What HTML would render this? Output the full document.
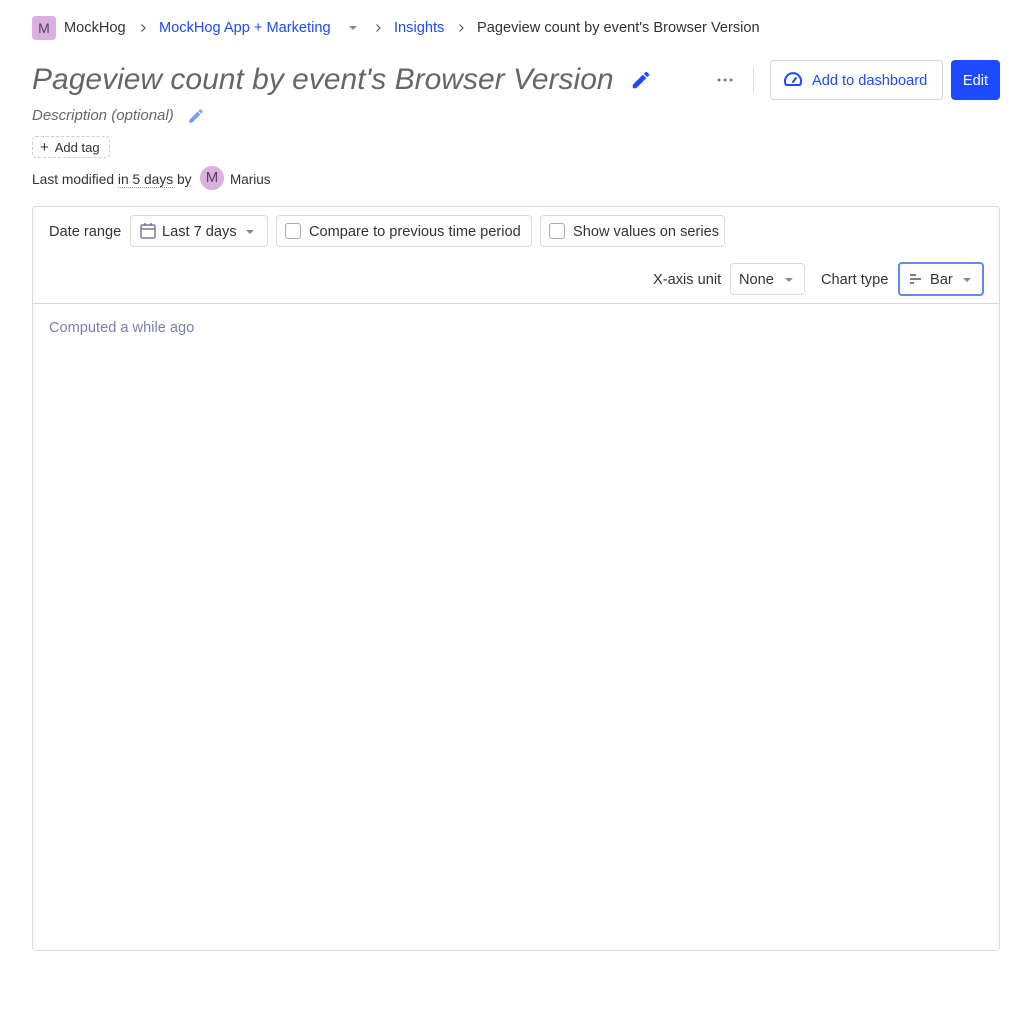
<!DOCTYPE html>
<html><head><meta charset="utf-8"><style>
*{box-sizing:border-box;margin:0;padding:0}
body{width:1032px;height:1031px;background:#fff;font-family:"Liberation Sans",sans-serif;color:#333;position:relative;overflow:hidden}
.a{position:absolute;white-space:nowrap}
.btn{position:absolute;border:1px solid #d9d9d9;border-radius:4px;background:#fff;font-size:14.6px;display:flex;align-items:center;padding-top:2px}
.caret{width:0;height:0;border-left:4px solid transparent;border-right:4px solid transparent;border-top:4px solid #888;display:inline-block}
.cb{width:16px;height:16px;border:1px solid #aaa;border-radius:3px;display:inline-block;margin-right:8px;margin-top:-2px}
.chev{position:absolute;top:22px}
</style></head><body>
<div class="a" style="left:32px;top:16px;width:24px;height:24px;border-radius:4px;background:#dbb0e0;color:#5a3d66;font-size:14px;text-align:center;line-height:24px">M</div>
<div class="a" style="left:64px;top:20px;font-size:14.6px;color:#333">MockHog</div>
<svg class="chev" style="left:139px" width="8" height="12" viewBox="0 0 8 12"><path d="M2.5 2.5l3.5 3.5-3.5 3.5" fill="none" stroke="#555" stroke-width="1.2"/></svg>
<div class="a" style="left:159px;top:20px;font-size:14.6px;color:#1d4aff">MockHog App + Marketing</div>
<div class="a" style="left:349px;top:26px;line-height:0"><span class="caret"></span></div>
<svg class="chev" style="left:374px" width="8" height="12" viewBox="0 0 8 12"><path d="M2.5 2.5l3.5 3.5-3.5 3.5" fill="none" stroke="#555" stroke-width="1.2"/></svg>
<div class="a" style="left:394px;top:20px;font-size:14.6px;color:#1d4aff">Insights</div>
<svg class="chev" style="left:457px" width="8" height="12" viewBox="0 0 8 12"><path d="M2.5 2.5l3.5 3.5-3.5 3.5" fill="none" stroke="#555" stroke-width="1.2"/></svg>
<div class="a" style="left:477px;top:20px;font-size:14.6px;color:#333">Pageview count by event's Browser Version</div>

<div class="a" style="left:32px;top:63px;font-size:30px;font-style:italic;color:#666">Pageview count by event's Browser Version</div>
<svg class="a" style="left:630px;top:69px" width="22" height="22" viewBox="0 0 24 24"><path d="M3 17.25V21h3.75L17.8 9.94l-3.75-3.75L3 17.25zM20.7 7.04a1 1 0 000-1.41l-2.34-2.34a1 1 0 00-1.41 0l-1.83 1.83 3.75 3.75 1.83-1.83z" fill="#1d4aff"/></svg>
<svg class="a" style="left:717px;top:77px" width="16" height="6" viewBox="0 0 16 6"><circle cx="2" cy="3" r="1.5" fill="#777"/><circle cx="8" cy="3" r="1.5" fill="#777"/><circle cx="14" cy="3" r="1.5" fill="#777"/></svg>
<div class="a" style="left:753px;top:68px;width:1px;height:24px;background:#ddd"></div>
<div class="btn" style="left:770px;top:60px;width:173px;height:40px;color:#1d4aff;padding-left:12px">
<svg width="20" height="20" viewBox="0 0 20 20" style="margin-right:9px;margin-top:-2px"><path d="M3 15 A8 8 0 1 1 17 15 Z" fill="none" stroke="#1d4aff" stroke-width="2" stroke-linejoin="round"/><path d="M10 12 L13 8" stroke="#1d4aff" stroke-width="2" stroke-linecap="round"/></svg>Add to dashboard</div>
<div class="a" style="left:951px;top:60px;width:49px;height:40px;background:#1d4aff;border-radius:4px;color:#fff;font-size:14.6px;display:flex;align-items:center;justify-content:center;padding-top:2px">Edit</div>

<div class="a" style="left:32px;top:107px;font-size:15px;font-style:italic;color:#666">Description (optional)</div>
<svg class="a" style="left:187px;top:107px" width="18" height="18" viewBox="0 0 24 24"><path d="M3 17.25V21h3.75L17.8 9.94l-3.75-3.75L3 17.25zM20.7 7.04a1 1 0 000-1.41l-2.34-2.34a1 1 0 00-1.41 0l-1.83 1.83 3.75 3.75 1.83-1.83z" fill="#7f9bff"/></svg>

<div class="a" style="left:32px;top:136px;width:78px;height:22px;border:1px dashed #ccc;border-radius:4px;font-size:13px;color:#333;line-height:21px;padding-left:7px"><span style="font-size:15px;margin-right:6px">+</span>Add tag</div>

<div class="a" style="left:32px;top:172px;font-size:13.8px;color:#333">Last modified <span style="border-bottom:1px dotted #999">in 5 days</span> by</div>
<div class="a" style="left:200px;top:166px;width:24px;height:24px;border-radius:12px;background:#dbb0e0;color:#5a3d66;font-size:15px;text-align:center;line-height:24px">M</div>
<div class="a" style="left:230px;top:172px;font-size:13.5px;color:#333">Marius</div>

<div class="a" style="left:32px;top:206px;width:968px;height:745px;border:1px solid #d9d9d9;border-radius:4px"></div>
<div class="a" style="left:33px;top:303px;width:966px;height:1px;background:#d9d9d9"></div>
<div class="a" style="left:49px;top:224px;font-size:14.6px;color:#333">Date range</div>
<div class="btn" style="left:130px;top:215px;width:138px;height:32px;padding-left:8px">
<svg width="18" height="18" viewBox="0 0 18 18" style="margin-right:5px;margin-top:-2px"><rect x="2" y="3" width="14" height="13" rx="1.5" fill="none" stroke="#7a7a99" stroke-width="1.5"/><path d="M2 7H16M6 1V4M12 1V4" stroke="#7a7a99" stroke-width="1.5"/></svg>Last 7 days<span class="caret" style="margin-left:9px"></span></div>
<div class="btn" style="left:276px;top:215px;width:256px;height:32px;padding-left:8px"><span class="cb"></span>Compare to previous time period</div>
<div class="btn" style="left:540px;top:215px;width:185px;height:32px;padding-left:8px"><span class="cb"></span>Show values on series</div>
<div class="a" style="left:653px;top:272px;font-size:14.6px;color:#333">X-axis unit</div>
<div class="btn" style="left:730px;top:263px;width:75px;height:32px;padding-left:8px">None<span class="caret" style="margin-left:11px"></span></div>
<div class="a" style="left:821px;top:272px;font-size:14.6px;color:#333">Chart type</div>
<div class="btn" style="left:898px;top:262px;width:86px;height:34px;border:2px solid #5b8def;padding-left:9px">
<svg width="14" height="14" viewBox="0 0 14 14" style="margin-right:7px;margin-top:-2px"><rect x="1" y="2" width="6" height="2" fill="#7a7a99"/><rect x="1" y="6" width="11" height="2" fill="#7a7a99"/><rect x="1" y="10" width="4" height="2" fill="#7a7a99"/></svg>Bar<span class="caret" style="margin-left:10px"></span></div>
<div class="a" style="left:49px;top:320px;font-size:14.6px;color:#7a7fa6">Computed a while ago</div>
</body></html>
